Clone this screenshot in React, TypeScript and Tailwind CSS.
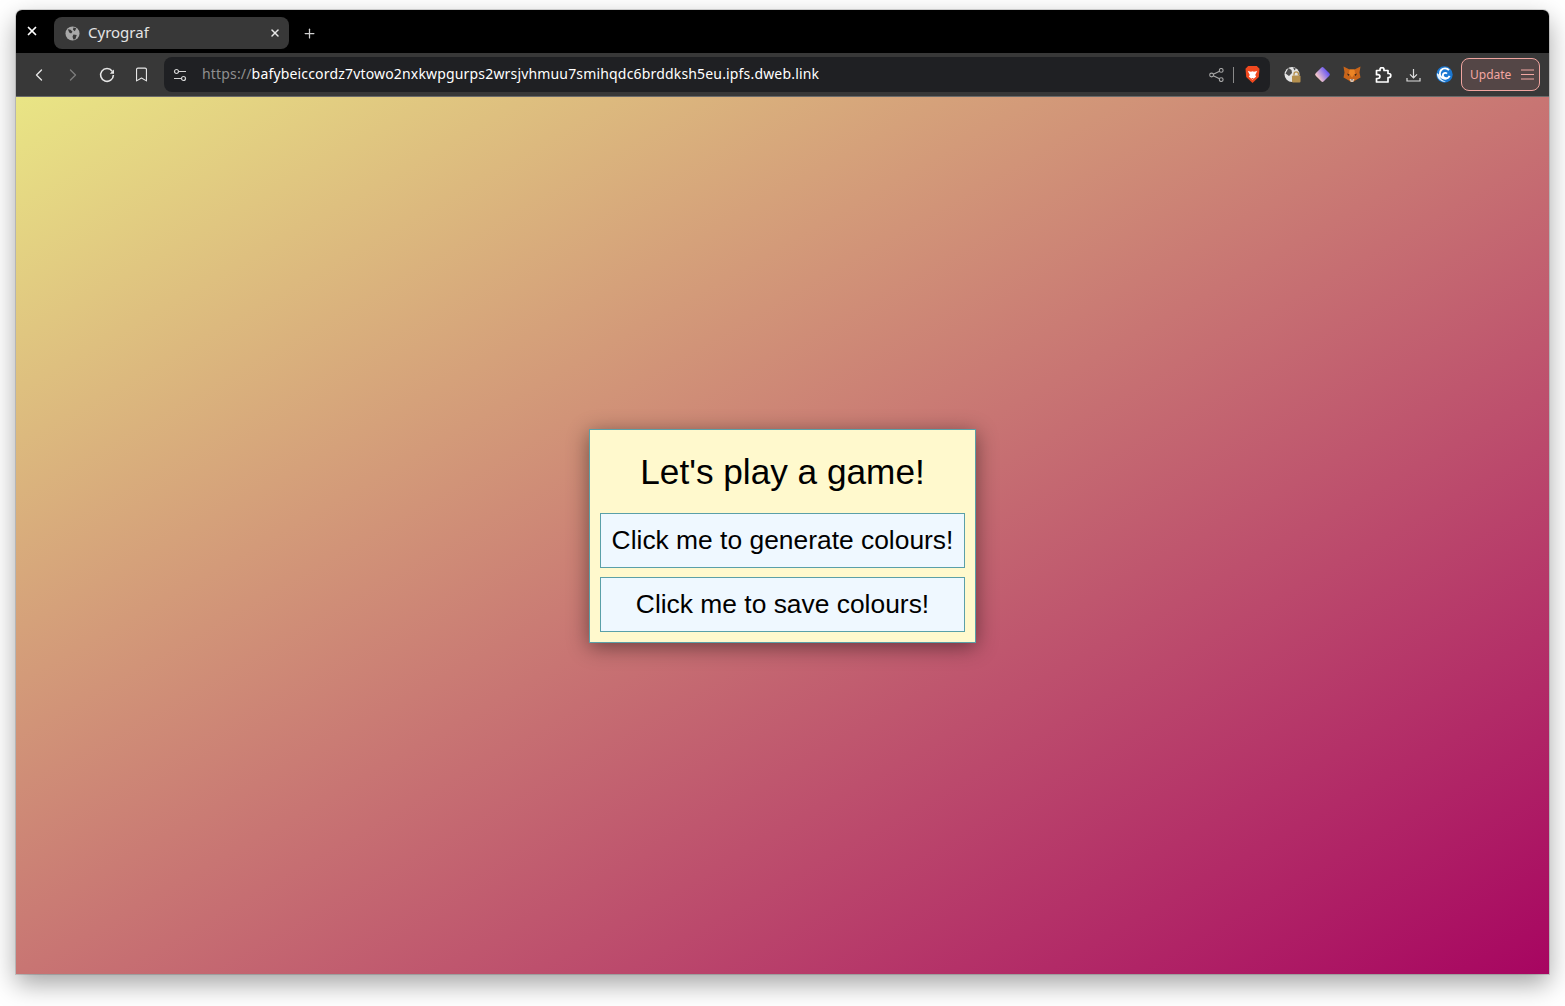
import { ChevronLeft, ChevronRight, Bookmark, Plus, X } from "lucide-react";

function TitleBar() {
  return (
    <div className="flex h-[43px] items-start bg-black pt-[7px]">
      <div className="flex h-[28px] w-[32px] items-center justify-center text-white">
        <X size={14} strokeWidth={3} />
      </div>
      <div className="ml-[6px] flex h-[32px] w-[235px] items-center rounded-lg bg-[#383838] pl-[11px] pr-[8px]">
        <svg width="15" height="15" viewBox="0 0 16 16" className="shrink-0">
          <circle cx="8" cy="8" r="7.5" fill="#a8a8a8" />
          <path d="M3 3.5l3 .5 2 2-1.5 2L4.5 7zM9 1.5l3 1-1.5 3L8.5 4zM9 9l3.5.5L11 14l-2 .5-1-3z" fill="#383838" />
        </svg>
        <span className="ml-[8px] flex-1 pb-[1px] text-[15px] text-[#e4e4e4]">Cyrograf</span>
        <X size={12} strokeWidth={3} className="text-[#e8e8e8]" />
      </div>
      <div className="ml-[13px] flex h-[32px] items-center">
        <Plus size={15} strokeWidth={2} className="text-[#d0d0d0]" />
      </div>
    </div>
  );
}

function AddressBar() {
  return (
    <div className="flex h-[35px] w-[1106px] items-center rounded-lg bg-[#1f2023] px-[9px]">
      <svg width="14" height="14" viewBox="0 0 14 14" fill="none" stroke="#d4d4d4" strokeWidth="1.2" className="shrink-0">
        <circle cx="3.5" cy="3.5" r="2" />
        <path d="M6 3.5h7M1 10.5h7" />
        <circle cx="10.5" cy="10.5" r="2" />
      </svg>
      <span className="ml-[15px] flex-1 pb-[3px] text-[14px] tracking-[0.17px] text-white">
        <span className="text-[#8f8f8f]">https://</span>bafybeiccordz7vtowo2nxkwpgurps2wrsjvhmuu7smihqdc6brddksh5eu.ipfs.dweb.link
      </span>
      <svg width="15" height="14" viewBox="0 0 15 14" fill="none" stroke="#a8a8a8" strokeWidth="1.1">
        <circle cx="2.6" cy="7" r="1.9" />
        <circle cx="12.2" cy="2.4" r="1.9" />
        <circle cx="12.2" cy="11.6" r="1.9" />
        <path d="M4.3 6.2l6.200-3M4.3 7.800l6.200 3" />
      </svg>
      <div className="ml-[9px] h-[16px] w-px bg-[#8a8a8a]" />
      <svg width="17" height="19" viewBox="0 0 17 19" className="ml-[10px]">
        <path d="M4.200 1h8.600l2.700 2.800-.7 8.200L8.500 18 2.200 12l-.7-8.200z" fill="#f1491f" />
        <path d="M3.800 6l3.200.8 1.500-.6 1.500.6 3.200-.8-2 4 1 1.500-3.700 3.200-3.700-3.200 1-1.500z" fill="#fff" />
        <path d="M7 13h3l-1.500 1.200z" fill="#f1491f" />
      </svg>
    </div>
  );
}

function ExtensionIcons() {
  return (
    <div className="ml-[7px] flex items-center">
      <div className="flex w-[30px] justify-center">
        {/* globe with a lock on it */}
        <svg width="17" height="17" viewBox="0 0 17 17">
          <circle cx="8" cy="8.500" r="7.500" fill="#e4e4e4" />
          <path d="M4.500 2l3 2 .5 3-3 3-3.500-2.500zM9 1.500l3 1-1.500 2z" fill="#4c4c4c" />
          <rect x="8" y="9.500" width="8.500" height="7" rx="1" fill="#b5904e" />
          <path d="M10 9.500V8a2.200 2.200 0 0 1 4.400 0v1.500" fill="none" stroke="#b5904e" strokeWidth="1.300" />
        </svg>
      </div>
      <div className="flex w-[30px] justify-center">
        <svg width="17" height="17" viewBox="0 0 17 17">
          <defs>
            <linearGradient id="dia" x1="0.6" y1="0" x2="0.4" y2="1">
              <stop offset="0" stopColor="#6a58f2" />
              <stop offset="1" stopColor="#f6c8c8" />
            </linearGradient>
          </defs>
          <rect x="2.800" y="2.800" width="11.400" height="11.400" rx="1.800" transform="rotate(45 8.500 8.500)" fill="url(#dia)" />
        </svg>
      </div>
      <div className="flex w-[30px] justify-center">
        {/* fox */}
        <svg width="18" height="17" viewBox="0 0 18 17">
          <path d="M.5 .5l6 3h5l6-3-1 6 1 5-4.500 2.500-3 2h-2l-3-2L.5 11.500l1-5z" fill="#c9651a" />
          <path d="M6.500 3.500h5l.5 4-3 4-3-4z" fill="#ec8424" />
          <path d="M4 7.500l2.500 1-1.200 1.500zM14 7.500l-2.500 1 1.200 1.500z" fill="#33241a" />
          <path d="M6.500 13h5l-1.300 3H7.800z" fill="#d9c4b4" />
          <path d="M8 13.500h2l-1 1z" fill="#33241a" />
        </svg>
      </div>
      <div className="flex w-[31px] justify-center">
        <svg width="18" height="16" viewBox="0 0 18 16" fill="none" stroke="#fff" strokeWidth="1.700" strokeLinejoin="round">
          <path d="M2.500 3.500H6V2.600a2 2 0 0 1 4 0v.9h4V6.500h.8a2 2 0 0 1 0 4H14v4.500H2.500v-3.500H4a1.900 1.900 0 0 0 0-3.800H2.500z" />
        </svg>
      </div>
      <div className="flex w-[31px] justify-center">
        <svg width="15" height="14" viewBox="0 0 15 14" fill="none" stroke="#dcdcdc" strokeWidth="1.200">
          <path d="M7.500 1v8.500M4 6.300l3.500 3.500L11 6.300M1 10v3h13v-3" />
        </svg>
      </div>
      <div className="flex w-[30px] justify-center">
        <svg width="17" height="17" viewBox="0 0 17 17">
          <circle cx="8.500" cy="8.500" r="8.200" fill="#1b78d2" />
          <path d="M1 7a7.700 7.700 0 0 0 9 8.600A8 8 0 0 1 3.500 9z" fill="#e6f2fb" />
          <path d="M13 4.200A5.200 5.200 0 1 0 13.600 10 3.600 3.600 0 0 1 6.800 9.600 2.500 2.500 0 0 1 11 7.600" fill="none" stroke="#fff" strokeWidth="1.900" />
        </svg>
      </div>
    </div>
  );
}

function Toolbar() {
  return (
    <div className="flex h-[44px] items-center border-b border-b-[#6a6a6a] bg-[#383838] pl-[13px]">
      <ChevronLeft size={20} strokeWidth={1.6} className="text-[#e6e6e6]" />
      <ChevronRight size={20} strokeWidth={1.6} className="ml-[14px] text-[#7c7c7c]" />
      <svg width="16" height="16" viewBox="0 0 16 16" fill="none" stroke="#e6e6e6" strokeWidth="1.600" className="ml-[16px]">
        <path d="M13.200 4.200A6.400 6.400 0 1 0 14.400 8" />
        <path d="M15 2.500v4.200h-4.200z" fill="#e6e6e6" stroke="none" />
      </svg>
      <Bookmark size={17} strokeWidth={1.6} className="ml-[18px] text-[#e6e6e6]" />
      <div className="ml-[14px]">
        <AddressBar />
      </div>
      <ExtensionIcons />
      <div className="ml-[2px] flex h-[33px] w-[79px] items-center justify-between rounded-lg border border-[#f0a5a0] bg-[#544646] pl-[8px] pr-[5px] text-[12px] text-[#f3a7a2]">
        <span>Update</span>
        <svg width="13" height="11" viewBox="0 0 13 11" stroke="#f3a7a2" strokeWidth="1">
          <path d="M0 1h13M0 5.500h13M0 10h13" />
        </svg>
      </div>
    </div>
  );
}

function GameCard() {
  return (
    <div className="w-[387px] border border-[#5aa0a8] bg-[#fff9cd] px-[10px] pb-[10px] font-['Liberation_Sans',sans-serif] text-black shadow-[0_4px_20px_rgba(0,0,0,0.45)]">
      <h1 className="h-[83px] pt-[22px] text-center text-[35.2px] leading-[40px]">Let's play a game!</h1>
      <button className="block h-[55px] w-full whitespace-nowrap border border-[#5aa0a8] bg-[#eff8ff] pt-[1px] text-[26.4px]">
        Click me to generate colours!
      </button>
      <button className="mt-[9px] block h-[55px] w-full whitespace-nowrap border border-[#5aa0a8] bg-[#eff8ff] pt-[1px] text-[26.4px]">
        Click me to save colours!
      </button>
    </div>
  );
}

export default function App() {
  return (
    <div className="h-[1006px] w-[1565px] overflow-hidden bg-white pl-[16px] pt-[10px] font-['Noto_Sans',sans-serif]">
      <div className="w-[1533px] overflow-hidden rounded-t-[6px] shadow-[0_10px_26px_rgba(0,0,0,0.36),0_0_0_1px_rgba(0,0,0,0.14)]">
        <TitleBar />
        <Toolbar />
        <div className="flex h-[877px] items-center justify-center bg-[linear-gradient(to_bottom_right,#e9e585,#a70561)]">
          <GameCard />
        </div>
      </div>
    </div>
  );
}
